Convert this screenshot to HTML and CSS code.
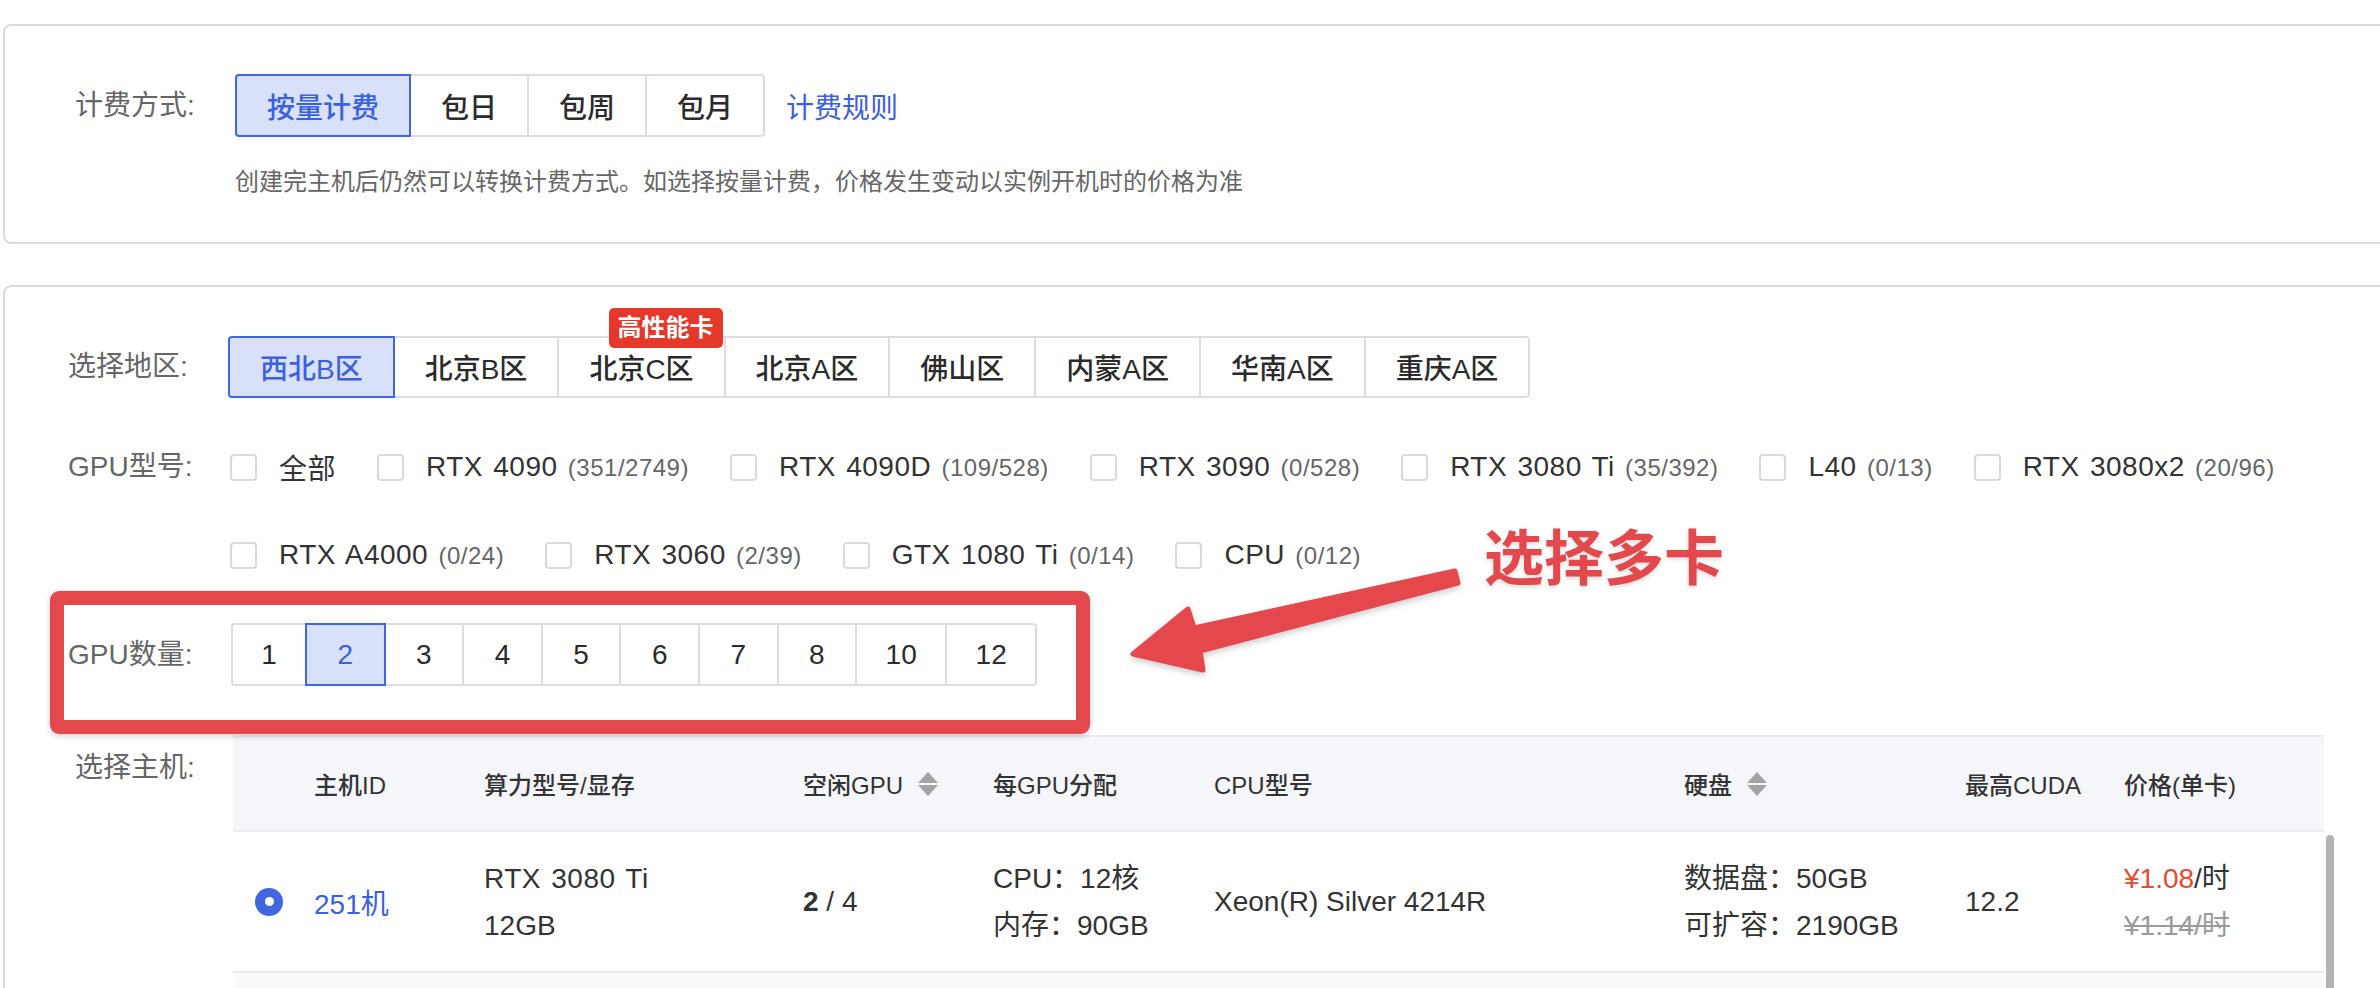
FILE: index.html
```html
<!DOCTYPE html>
<html lang="zh-CN">
<head>
<meta charset="utf-8">
<title>创建实例</title>
<link rel="stylesheet" href="styles.css">
</head>
<body>
<div class="page">
  <section class="card card-billing">
    <div class="form-row">
      <div class="label label-billing">计费方式:</div>
      <div class="content">
        <div class="seg-line">
          <div class="seg">
            <div class="seg-btn active">按量计费</div>
            <div class="seg-btn">包日</div>
            <div class="seg-btn">包周</div>
            <div class="seg-btn">包月</div>
          </div>
          <a class="link">计费规则</a>
        </div>
        <p class="hint">创建完主机后仍然可以转换计费方式。如选择按量计费，价格发生变动以实例开机时的价格为准</p>
      </div>
    </div>
  </section>

  <section class="card card-config">
    <div class="form-row row-region">
      <div class="label label-62">选择地区:</div>
      <div class="seg seg-region">
        <div class="seg-btn tab active">西北B区</div>
        <div class="seg-btn tab">北京B区</div>
        <div class="seg-btn tab has-badge">北京C区<span class="badge">高性能卡</span></div>
        <div class="seg-btn tab">北京A区</div>
        <div class="seg-btn tab">佛山区</div>
        <div class="seg-btn tab">内蒙A区</div>
        <div class="seg-btn tab">华南A区</div>
        <div class="seg-btn tab">重庆A区</div>
      </div>
    </div>

    <div class="form-row row-model">
      <div class="label label-62">GPU型号:</div>
      <div class="check-lines">
        <div class="check-line">
          <label class="check"><span class="box"></span><span class="name">全部</span></label>
          <label class="check"><span class="box"></span><span class="name">RTX 4090 <em>(351/2749)</em></span></label>
          <label class="check"><span class="box"></span><span class="name">RTX 4090D <em>(109/528)</em></span></label>
          <label class="check"><span class="box"></span><span class="name">RTX 3090 <em>(0/528)</em></span></label>
          <label class="check"><span class="box"></span><span class="name">RTX 3080 Ti <em>(35/392)</em></span></label>
          <label class="check"><span class="box"></span><span class="name">L40 <em>(0/13)</em></span></label>
          <label class="check"><span class="box"></span><span class="name">RTX 3080x2 <em>(20/96)</em></span></label>
        </div>
        <div class="check-line">
          <label class="check"><span class="box"></span><span class="name">RTX A4000 <em>(0/24)</em></span></label>
          <label class="check"><span class="box"></span><span class="name">RTX 3060 <em>(2/39)</em></span></label>
          <label class="check"><span class="box"></span><span class="name">GTX 1080 Ti <em>(0/14)</em></span></label>
          <label class="check"><span class="box"></span><span class="name">CPU <em>(0/12)</em></span></label>
        </div>
      </div>
    </div>

    <div class="form-row row-count">
      <div class="label label-63">GPU数量:</div>
      <div class="seg seg-count">
        <div class="seg-btn num">1</div>
        <div class="seg-btn num active">2</div>
        <div class="seg-btn num">3</div>
        <div class="seg-btn num">4</div>
        <div class="seg-btn num">5</div>
        <div class="seg-btn num">6</div>
        <div class="seg-btn num">7</div>
        <div class="seg-btn num">8</div>
        <div class="seg-btn num wide">10</div>
        <div class="seg-btn num wide">12</div>
      </div>
    </div>

    <div class="form-row row-host">
      <div class="label label-host">选择主机:</div>
      <div class="table-wrap">
        <div class="table">
          <div class="thead">
            <div class="th"></div>
            <div class="th">主机ID</div>
            <div class="th">算力型号/显存</div>
            <div class="th">空闲GPU <svg class="sort" viewBox="0 0 20 24" width="20" height="24"><path d="M0 11 L10 0 L20 11 Z M0 13 L20 13 L10 24 Z" fill="#a3a3a3"/></svg></div>
            <div class="th">每GPU分配</div>
            <div class="th">CPU型号</div>
            <div class="th">硬盘 <svg class="sort" viewBox="0 0 20 24" width="20" height="24"><path d="M0 11 L10 0 L20 11 Z M0 13 L20 13 L10 24 Z" fill="#a3a3a3"/></svg></div>
            <div class="th">最高CUDA</div>
            <div class="th">价格(单卡)</div>
          </div>
          <div class="tr">
            <div class="td"><span class="radio"></span></div>
            <div class="td"><span class="host-id">251机</span></div>
            <div class="td two"><span class="wide-latin">RTX 3080 Ti</span><span>12GB</span></div>
            <div class="td"><span><b>2</b> / 4</span></div>
            <div class="td two"><span>CPU：12核</span><span>内存：90GB</span></div>
            <div class="td">Xeon(R) Silver 4214R</div>
            <div class="td two"><span>数据盘：50GB</span><span>可扩容：2190GB</span></div>
            <div class="td">12.2</div>
            <div class="td two"><span><span class="price">¥1.08</span>/时</span><span class="old-price">¥1.14/时</span></div>
          </div>
          <div class="tr tr-next"></div>
        </div>
        <div class="scroll-gutter"><div class="thumb"></div></div>
      </div>
    </div>
  </section>
</div>

<div class="mark-box"></div>
<svg class="mark-arrow" width="2380" height="988" viewBox="0 0 2380 988">
  <path d="M1194 628 L1188 609 L1133 654 L1203 670 L1200 651 L1458 583 L1455 571 Z" fill="#e4484c" stroke="#e4484c" stroke-width="5" stroke-linejoin="round"/>
</svg>
<div class="mark-text">选择多卡</div>
</body>
</html>
```

FILE: styles.css
```css
* { box-sizing: border-box; }

html, body {
  margin: 0;
  padding: 0;
}

body {
  position: relative;
  width: 2380px;
  height: 988px;
  overflow: hidden;
  background: #ffffff;
  color: #333333;
  font-family: "Liberation Sans", "Noto Sans CJK SC", sans-serif;
  font-size: 28px;
}

.page {
  padding-top: 24px;
}

.card {
  border: 2px solid #dadae0;
  border-radius: 8px;
  margin-left: 3px;
  margin-right: -40px;
}

.card-billing {
  padding: 48px 0 43px 70px;
}

.card-config {
  margin-top: 41px;
  padding: 49px 0 0 63px;
  height: 760px;
}

.form-row {
  display: flex;
  align-items: flex-start;
}

.label {
  width: 160px;
  flex: none;
  color: #666666;
  font-size: 28px;
  white-space: nowrap;
}

.label-billing { line-height: 63px; }
.label-62 { line-height: 62px; }
.label-63 { line-height: 63px; }
.label-host { line-height: 66px; padding-left: 7px; }

.seg-line {
  display: flex;
  align-items: center;
  height: 63px;
}

.seg {
  display: flex;
  height: 63px;
}

.seg-btn {
  position: relative;
  height: 63px;
  padding: 0 30px;
  border: 2px solid #dcdce2;
  margin-left: -2px;
  display: flex;
  align-items: center;
  justify-content: center;
  background: #ffffff;
  color: #2b2b2b;
  font-size: 28px;
  font-weight: 500;
  white-space: nowrap;
}

.seg-btn:first-child {
  margin-left: 0;
  border-radius: 4px 0 0 4px;
}

.seg-btn:last-child {
  border-radius: 0 4px 4px 0;
}

.seg-btn.active {
  z-index: 1;
  background: #d8e0fa;
  border-color: #4067e3;
  color: #3b60e0;
}

.link {
  margin-left: 21px;
  color: #3b60e0;
  font-size: 28px;
}

.hint {
  margin: 28px 0 0;
  font-size: 24px;
  line-height: 34px;
  color: #666666;
}

/* region tabs */
.seg-region {
  height: 62px;
}

.seg-region .seg-btn {
  height: 62px;
  padding: 0 30px;
}

.badge {
  position: absolute;
  right: 1px;
  top: -30px;
  height: 40px;
  padding: 0 9px;
  background: #e5372a;
  color: #ffffff;
  font-size: 24px;
  font-weight: 700;
  line-height: 40px;
  border-radius: 5px;
}

/* gpu model */
.row-model {
  margin-top: 38px;
}

.check-lines {
  display: flex;
  flex-direction: column;
  gap: 26px;
  padding-left: 2px;
}

.check-line {
  display: flex;
  align-items: center;
  height: 62px;
}

.check {
  display: flex;
  align-items: center;
  margin-right: 41px;
  white-space: nowrap;
}

.box {
  width: 27px;
  height: 27px;
  border: 2px solid #d9d9df;
  border-radius: 4px;
  background: #ffffff;
}

.name {
  margin-left: 22px;
  font-size: 28px;
  color: #333333;
  letter-spacing: 0.5px;
  word-spacing: 2px;
}

.name em {
  font-style: normal;
  font-size: 24px;
  color: #666666;
}

/* gpu count */
.row-count {
  margin-top: 37px;
}

.seg-count {
  margin-left: 3px;
}

.seg-count .seg-btn {
  padding: 0;
  width: 80.6px;
  font-weight: 400;
}

.seg-count .seg-btn:first-child {
  width: 76px;
}

.seg-count .seg-btn.wide {
  width: 92px;
}

/* table */
.row-host {
  margin-top: 49px;
}

.table-wrap {
  display: flex;
  margin-left: 5px;
}

.table {
  width: 2091px;
}

.thead,
.tr {
  display: grid;
  grid-template-columns: 61px 170px 319px 190px 221px 470px 281px 159px 220px;
}

.thead {
  height: 97px;
  background: #f5f6fa;
  border-top: 2px solid #eaebef;
  border-bottom: 2px solid #eaebef;
}

.th {
  display: flex;
  align-items: center;
  padding-left: 20px;
  font-size: 24px;
  font-weight: 500;
  color: #333333;
  white-space: nowrap;
}

.sort {
  margin-left: 15px;
}

.tr {
  height: 141px;
  border-bottom: 2px solid #eaebef;
  background: #ffffff;
}

.tr-next {
  height: 80px;
  background: #f9fafc;
  border-bottom: none;
}

.td {
  display: flex;
  align-items: center;
  padding-left: 20px;
  font-size: 28px;
  color: #333333;
  white-space: nowrap;
}

.td:first-child {
  padding-left: 22px;
}

.td.two {
  flex-direction: column;
  align-items: flex-start;
  justify-content: center;
  line-height: 47px;
}

.wide-latin {
  letter-spacing: 0.5px;
  word-spacing: 2px;
}

.radio {
  width: 28px;
  height: 28px;
  border-radius: 50%;
  background: #4166e2;
  display: flex;
  align-items: center;
  justify-content: center;
}

.radio::after {
  content: "";
  width: 9px;
  height: 9px;
  border-radius: 50%;
  background: #ffffff;
}

.host-id {
  color: #3b60e0;
}

.td b {
  font-weight: 700;
}

.price {
  color: #e8492f;
}

.old-price {
  color: #9a9a9a;
  text-decoration: line-through;
}

.scroll-gutter {
  width: 12px;
  padding: 100px 0 0 2px;
}

.thumb {
  width: 8px;
  height: 400px;
  border-radius: 4px;
  background: #b4b4b4;
}

/* annotations */
.mark-box {
  position: absolute;
  left: 50px;
  top: 591px;
  width: 1040px;
  height: 143px;
  border: 14px solid #e3484c;
  border-radius: 9px;
  box-shadow: 0 2px 6px rgba(0, 0, 0, 0.18);
}

.mark-arrow {
  position: absolute;
  left: 0;
  top: 0;
  filter: drop-shadow(0 3px 3px rgba(0, 0, 0, 0.2));
}

.mark-text {
  position: absolute;
  left: 1484px;
  top: 518px;
  font-family: "Noto Sans CJK SC", sans-serif;
  font-size: 60px;
  font-weight: 700;
  line-height: 72px;
  color: #e3484c;
  text-shadow: 0 2px 4px rgba(0, 0, 0, 0.15);
}
```
